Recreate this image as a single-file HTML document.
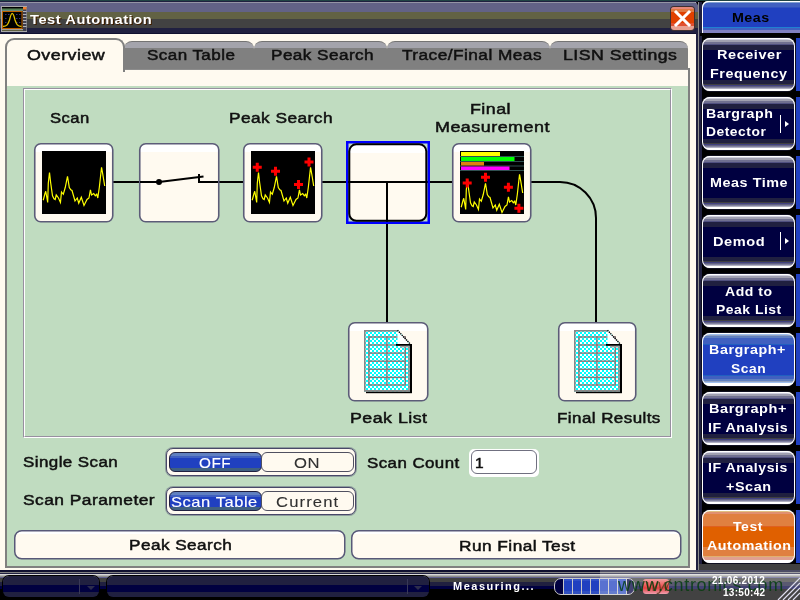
<!DOCTYPE html>
<html><head><meta charset="utf-8">
<style>
*{margin:0;padding:0;box-sizing:border-box}
html,body{width:800px;height:600px;overflow:hidden;background:#000}
body{position:relative;font-family:"Liberation Sans",sans-serif}
.a{position:absolute}
.t{position:absolute;white-space:nowrap;line-height:1;will-change:transform}
.tab{position:absolute;top:41px;height:29px;background:linear-gradient(#a4a4ac 0,#a4a4ac 6px,#808080 6px,#808080 27px,#8c8c8c 27px);border-top:1px solid #747474;border-radius:8px 8px 0 0}
.tt{font-size:15.5px;color:#101010;top:46px;-webkit-text-stroke:0.5px #101010}
.lbl{font-size:15.5px;color:#101010;-webkit-text-stroke:0.5px #101010}
.rb{position:absolute;left:702px;width:93px;height:53px;border-radius:8px;box-shadow:inset 0 0 0 1px #fff,0 0 0 1px #101020;
background:linear-gradient(#fff 0,#fff 1px,#d0d0e0 1px,#d0d0e0 2px,#a0a0b0 2px,#a0a0b0 4px,#707090 4px,#707090 6px,#505080 6px,#505080 7px,#202040 7px,#202040 12px,#000040 12px,#000040 42px,#202040 42px,#202040 46px,#404040 46px,#404040 47px,#404080 47px,#404080 48px,#606080 48px,#606080 49px,#8080a0 49px,#8080a0 50px,#b0b0c0 50px,#b0b0c0 51px,#fff 51px)}
.rb.blue{background:linear-gradient(#fff 0,#fff 1px,#a0c0f0 1px,#a0c0f0 2px,#90a0c0 2px,#90a0c0 3px,#6080c0 3px,#6080c0 5px,#4060c0 5px,#4060c0 11px,#2060c0 11px,#2060c0 12px,#2040c0 12px,#2040c0 42px,#2060c0 42px,#2060c0 43px,#4060c0 43px,#4060c0 46px,#6080c0 46px,#6080c0 48px,#90a0c0 48px,#90a0c0 49px,#a0c0f0 49px,#a0c0f0 50px,#fff 50px)}
.rb.org{background:linear-gradient(#fff 0,#fff 1px,#e0c080 1px,#e0c080 2px,#e09070 2px,#e09070 4px,#e08040 4px,#e08040 16px,#e06020 16px,#e06020 17px,#e06000 17px,#e06000 37px,#e08040 37px,#e08040 46px,#e0b070 46px,#e0b070 47px,#e0a090 47px,#e0a090 50px,#fff 50px)}
.rs{position:absolute;left:796px;width:4px;background:#2040c0}
.rt{font-size:13px;font-weight:bold;color:#fff;letter-spacing:1px}
</style></head><body>
<!-- main window background -->
<div class="a" style="left:0;top:0;width:696px;height:570px;background:#fffaf0"></div>
<!-- title bar -->
<div class="a" style="left:0;top:0;width:699px;height:34px;border-radius:0 9px 0 0;background:linear-gradient(#204444 0,#204444 1px,#202040 1px,#202040 2px,#9494a4 2px,#9494a4 3px,#626286 3px,#626286 12px,#626244 12px,#626244 19px,#424242 19px,#424242 28px,#202040 28px,#202040 33px,#101030 33px,#101030 34px)"></div>
<div class="a" style="left:0;top:0;width:800px;height:1px;background:#204444"></div><div class="a" style="left:0;top:1px;width:698px;height:1px;background:#202040"></div>
<div class="t" style="left:29.8px;top:13.0px;font-size:13px;font-weight:bold;color:#fff;letter-spacing:0.5px;transform:scaleX(1.125);transform-origin:0 0;text-shadow:1px 1px 0 #402000">Test Automation</div>


<!-- title icon -->
<svg class="a" style="left:0;top:0" width="30" height="34" viewBox="0 0 30 34">
<rect x="1.5" y="6.5" width="25" height="25" fill="#202020" stroke="#a8a8a8" stroke-width="1"/>
<rect x="2" y="7" width="21" height="1.5" fill="#000"/>
<rect x="2" y="8.5" width="21" height="1.8" fill="#508050"/>
<rect x="2" y="10.3" width="21" height="0.9" fill="#80a8a0"/>
<rect x="2.5" y="11.5" width="19.5" height="17" fill="#000" stroke="#c06000" stroke-width="1"/>
<g fill="#303080"><rect x="5" y="14" width="1.5" height="1"/><rect x="8" y="14" width="1.5" height="1"/><rect x="16" y="14" width="1.5" height="1"/><rect x="19" y="14" width="1.5" height="1"/><rect x="5" y="18" width="1.5" height="1"/><rect x="16" y="18" width="1.5" height="1"/><rect x="19" y="18" width="1.5" height="1"/><rect x="5" y="22" width="1.5" height="1"/><rect x="16" y="22" width="1.5" height="1"/><rect x="19" y="22" width="1.5" height="1"/></g>
<path d="M3,26.5 C7,26.5 8,24.5 9.5,20 C11,13.5 11.5,13.3 12.2,13.3 C13,13.3 13.5,13.5 15,20 C16.5,24.5 17.5,26.5 21.5,26.5" fill="none" stroke="#e0c000" stroke-width="1.3"/>
<rect x="2" y="29" width="21" height="1" fill="#a0a0a0"/>
<rect x="2" y="30" width="21" height="1" fill="#606040"/>
<rect x="23" y="7" width="3.5" height="24" fill="#404050"/>
<rect x="23" y="7" width="3.5" height="2.5" fill="#f08030"/>
<g fill="#d0d0d0"><rect x="23" y="11" width="3.5" height="0.8"/><rect x="23" y="14" width="3.5" height="0.8"/><rect x="23" y="17" width="3.5" height="0.8"/><rect x="23" y="20" width="3.5" height="0.8"/><rect x="23" y="23" width="3.5" height="0.8"/><rect x="23" y="26" width="3.5" height="0.8"/></g>
</svg>
<!-- close button -->
<div class="a" style="left:671px;top:7px;width:23px;height:23px;border-radius:3px;box-shadow:0 0 0 1px #403030;background:linear-gradient(#e88878 0,#e88878 2px,#e07840 2px,#e07840 5px,#e04000 5px,#e04000 16px,#e05030 16px,#e05030 19px,#e8a090 19px)"></div>
<svg class="a" style="left:671px;top:7px" width="23" height="23" viewBox="0 0 23 23"><path d="M5,5 L18,18 M18,5 L5,18" stroke="#fff" stroke-width="3" stroke-linecap="square"/></svg>

<!-- right strip -->
<div class="a" style="left:696px;top:33px;width:4px;height:537px;background:#202040"></div><div class="a" style="left:699px;top:2px;width:3px;height:31px;background:#202040"></div>
<div class="a" style="left:698px;top:2px;width:1px;height:568px;background:#909090"></div>

<!-- tab panel -->
<div class="a" style="left:5px;top:68px;width:685px;height:500px;border:2px solid #808080;border-top:none;background:#fffaf0"></div>
<div class="a" style="left:7px;top:86px;width:681px;height:480px;background:#c0dcc0"></div>
<div class="a" style="left:23px;top:88px;width:649px;height:350px;border-top:1px solid #9890a0;border-left:1px solid #9890a0;border-bottom:1px solid #fff;border-right:1px solid #fff"></div>
<div class="a" style="left:24px;top:89px;width:647px;height:348px;border-top:1px solid #fff;border-left:1px solid #fff;border-bottom:1px solid #9890a0;border-right:1px solid #9890a0"></div>

<!-- tabs -->
<div class="tab" style="left:124px;width:130px"></div>
<div class="tab" style="left:254px;width:133px"></div>
<div class="tab" style="left:387px;width:163px"></div>
<div class="tab" style="left:550px;width:138px"></div>
<div class="a" style="left:5px;top:38px;width:120px;height:34px;background:#fffaf0;border:2px solid #808080;border-bottom:none;border-radius:9px 9px 0 0"></div>
<div class="a" style="left:7px;top:68px;width:116px;height:4px;background:#fffaf0"></div>
<div class="t tt" style="left:26.7px;top:47.3px;letter-spacing:0.4px;transform:scaleX(1.153);transform-origin:0 0">Overview</div>
<div class="t tt" style="left:146.5px;top:47.3px;letter-spacing:0.4px;transform:scaleX(1.098);transform-origin:0 0">Scan Table</div>
<div class="t tt" style="left:271.3px;top:47.3px;letter-spacing:0.4px;transform:scaleX(1.106);transform-origin:0 0">Peak Search</div>
<div class="t tt" style="left:401.5px;top:47.3px;letter-spacing:0.4px;transform:scaleX(1.115);transform-origin:0 0">Trace/Final Meas</div>
<div class="t tt" style="left:563.2px;top:47.3px;letter-spacing:0.4px;transform:scaleX(1.144);transform-origin:0 0">LISN Settings</div>

<!-- DIAGRAM -->
<svg class="a" style="left:0;top:0" width="800" height="600" viewBox="0 0 800 600">
<defs>
<linearGradient id="bx2" x1="0" y1="0" x2="0" y2="1"><stop offset="0" stop-color="#fff"/><stop offset="0.1" stop-color="#fff"/><stop offset="0.1" stop-color="#fffaf0"/><stop offset="1" stop-color="#fffaf0"/></linearGradient>
<linearGradient id="bx" x1="0" y1="0" x2="0" y2="1"><stop offset="0" stop-color="#fff"/><stop offset="0.11" stop-color="#fff"/><stop offset="0.11" stop-color="#fffaf0"/><stop offset="1" stop-color="#fffaf0"/></linearGradient>
<pattern id="chk" x="0" y="0" width="4" height="4" patternUnits="userSpaceOnUse"><rect width="4" height="4" fill="#fff"/><rect width="2" height="2" fill="#00ffff"/><rect x="2" y="2" width="2" height="2" fill="#00ffff"/></pattern>
<polyline id="tr" fill="none" stroke="#ffff00" stroke-width="1.2" points="1.2,49.25 3,42.5 3.75,40.25 4.8,46.25 5.7,51.5 6.3,32 7.5,21.5 8.7,32 10.5,44.75 12,47.75 13.2,48.5 14.25,44 16.5,47 18.45,51.5 19.5,41 21.3,43.25 23.25,36.5 25.5,25.25 27.3,36.5 28.8,38.75 30,39.5 33,50 35.25,47 36.75,52.25 39.3,46.25 42,54.5 45,48.5 46.95,47 48.45,38.75 49.5,44 51.75,42.5 53.25,44.75 54.75,43.25 55.8,47 57.3,36.5 59.55,16.25 60.75,23 62.7,35"/>
<path id="cr" d="M-1.5,-4.5h3v3h3v3h-3v3h-3v-3h-3v-3h3z" fill="#ff0000"/>
<g id="doc">
<polygon points="0,0 33.5,0 46,14 46,61.5 0,61.5" fill="url(#chk)"/>
<rect x="46" y="14" width="2" height="49" fill="#000"/>
<rect x="2" y="61.5" width="46" height="1.7" fill="#000"/>
<rect x="0" y="0" width="1.6" height="61.5" fill="#888"/>
<rect x="0" y="0" width="33.5" height="1.6" fill="#888"/>
<rect x="0" y="60" width="46" height="1.6" fill="#888"/>
<rect x="44.2" y="16" width="1.6" height="45.5" fill="#888"/>
<g fill="#887878">
<rect x="4.2" y="6.3" width="1.4" height="49"/>
<rect x="40.6" y="6.3" width="1.4" height="49"/>
<rect x="22.2" y="6.3" width="1.4" height="49"/>
<rect x="4.2" y="6.3" width="37.8" height="1.4"/>
<rect x="4.2" y="14.3" width="37.8" height="1.4"/>
<rect x="4.2" y="22.4" width="37.8" height="1.4"/>
<rect x="4.2" y="30.5" width="37.8" height="1.4"/>
<rect x="4.2" y="38.6" width="37.8" height="1.4"/>
<rect x="4.2" y="46.7" width="37.8" height="1.4"/>
<rect x="4.2" y="54.3" width="37.8" height="1.4"/>
</g>
<polygon points="33.5,0.5 33.5,14 46,14" fill="#fff"/>
<line x1="33.5" y1="0.3" x2="46.5" y2="14.3" stroke="#000" stroke-width="1.4" stroke-dasharray="1.3 0.8"/>
<rect x="32" y="14" width="16" height="1.8" fill="#000"/>
<rect x="36" y="15.8" width="9" height="1.6" fill="#a0a0a0"/>
</g>
</defs>

<!-- connection lines -->
<g stroke="#000" stroke-width="2" fill="none">
<line x1="112" y1="182" x2="159" y2="182"/>
<line x1="199" y1="182" x2="245" y2="182"/>
<line x1="321" y1="182" x2="454" y2="182"/>
<path d="M530,182 H560 A36,36 0 0 1 596,218 V323"/>
<line x1="387" y1="182" x2="387" y2="323"/>
</g>

<!-- boxes -->
<rect x="34.75" y="143.75" width="78" height="78" rx="6" fill="url(#bx)" stroke="#5c5c78" stroke-width="1.6"/>
<rect x="139.75" y="143.75" width="79" height="78" rx="6" fill="url(#bx)" stroke="#5c5c78" stroke-width="1.6"/>
<rect x="243.75" y="143.75" width="78" height="78" rx="6" fill="url(#bx)" stroke="#5c5c78" stroke-width="1.6"/>
<rect x="452.75" y="143.75" width="78" height="78" rx="6" fill="url(#bx)" stroke="#5c5c78" stroke-width="1.6"/>
<rect x="348.75" y="322.75" width="79" height="78" rx="6" fill="url(#bx)" stroke="#5c5c78" stroke-width="1.6"/>
<rect x="558.75" y="322.75" width="77" height="78" rx="6" fill="url(#bx)" stroke="#5c5c78" stroke-width="1.6"/>

<!-- selected box -->
<rect x="347.25" y="142.25" width="81.5" height="80.5" fill="none" stroke="#0000ff" stroke-width="2.5"/>
<rect x="349.3" y="144.3" width="77" height="76.5" rx="7" fill="url(#bx)" stroke="#000" stroke-width="2"/>
<g stroke="#000" stroke-width="2"><line x1="349" y1="182" x2="427" y2="182"/><line x1="387" y1="182" x2="387" y2="221"/></g>

<!-- switch -->
<g stroke="#000" stroke-width="2" fill="none">
<line x1="140" y1="182" x2="159" y2="182"/>
<line x1="159" y1="182" x2="203.5" y2="176.5"/>
<polyline points="199,174 199,182 218,182"/>
</g>
<circle cx="159" cy="182" r="3" fill="#000"/>

<!-- scan screen -->
<g transform="translate(42,151)"><rect width="64" height="63" fill="#000"/><use href="#tr"/></g>
<!-- peak search screen -->
<g transform="translate(251,151)"><rect width="64" height="63" fill="#000"/><use href="#tr"/>
<use href="#cr" x="6.25" y="16.25"/><use href="#cr" x="24.5" y="20.3"/><use href="#cr" x="47.5" y="33.5"/><use href="#cr" x="58" y="11"/></g>
<!-- final screen -->
<g transform="translate(460,151)"><rect width="64" height="63" fill="#000"/>
<rect x="0" y="5" width="64" height="1" fill="#305050"/><rect x="0" y="10" width="64" height="1" fill="#305050"/><rect x="0" y="14.5" width="64" height="1" fill="#305050"/><rect x="0" y="19" width="64" height="1" fill="#305050"/>
<rect x="1" y="1" width="39" height="4" fill="#ffff00"/>
<rect x="1" y="6" width="53.5" height="4" fill="#00ff00"/>
<rect x="1" y="11" width="23" height="3.5" fill="#e08010"/>
<rect x="1" y="15.5" width="48.5" height="3.5" fill="#ff00ff"/>
<use href="#tr" y="7"/>
<use href="#cr" x="7.2" y="32"/><use href="#cr" x="25.5" y="26.3"/><use href="#cr" x="48.4" y="36.2"/><use href="#cr" x="58.9" y="57.2"/></g>

<!-- docs -->
<use href="#doc" x="364" y="330"/>
<use href="#doc" x="574" y="330"/>

<!-- bottom buttons -->
<rect x="14.75" y="530.75" width="330" height="28" rx="7" fill="url(#bx2)" stroke="#585878" stroke-width="1.5"/>
<rect x="351.75" y="530.75" width="329" height="28" rx="7" fill="url(#bx2)" stroke="#585878" stroke-width="1.5"/>
</svg>

<!-- diagram labels -->
<div class="t lbl" style="left:49.8px;top:110.0px;letter-spacing:0.4px;transform:scaleX(1.073);transform-origin:0 0">Scan</div>
<div class="t lbl" style="left:229.3px;top:110.4px;letter-spacing:0.4px;transform:scaleX(1.116);transform-origin:0 0">Peak Search</div>
<div class="t lbl" style="left:469.5px;top:100.5px;letter-spacing:0.4px;transform:scaleX(1.151);transform-origin:0 0">Final</div>
<div class="t lbl" style="left:434.8px;top:119.0px;letter-spacing:0.4px;transform:scaleX(1.158);transform-origin:0 0">Measurement</div>
<div class="t lbl" style="left:349.5px;top:409.5px;letter-spacing:0.4px;transform:scaleX(1.150);transform-origin:0 0">Peak List</div>
<div class="t lbl" style="left:557.4px;top:409.5px;letter-spacing:0.4px;transform:scaleX(1.095);transform-origin:0 0">Final Results</div>

<!-- controls -->
<div class="t lbl" style="left:23.2px;top:454.1px;letter-spacing:0.4px;transform:scaleX(1.093);transform-origin:0 0">Single Scan</div>
<div class="t lbl" style="left:23.2px;top:492.2px;letter-spacing:0.4px;transform:scaleX(1.123);transform-origin:0 0">Scan Parameter</div>
<div class="t lbl" style="left:367.0px;top:455.0px;letter-spacing:0.4px;transform:scaleX(1.090);transform-origin:0 0">Scan Count</div>

<!-- right panel -->
<div class="a" style="left:702px;top:1px;width:98px;height:32px;border-radius:6px 0 0 0;box-shadow:inset 1px 1px 0 #fff;background:linear-gradient(#fff 0,#fff 1px,#80a0d0 1px,#80a0d0 2px,#4060c0 2px,#4060c0 6px,#3050c0 6px,#3050c0 7px,#2040c0 7px,#2040c0 26px,#2080d0 26px,#2080d0 27px,#4060c0 27px,#4060c0 29px,#8080c0 29px)"></div>
<div class="t" style="left:731.5px;top:11px;font-size:13px;font-weight:bold;color:#000;letter-spacing:0.4px;transform:scaleX(1.1);transform-origin:0 0">Meas</div>

<div class="a" style="left:700px;top:36px;width:2px;height:530px;background:#202040"></div>
<div class="rs" style="top:38px;height:53px"></div>
<div class="rs" style="top:97px;height:53px"></div>
<div class="rs" style="top:156px;height:53px"></div>
<div class="rs" style="top:215px;height:53px"></div>
<div class="rs" style="top:274px;height:53px"></div>
<div class="rs" style="top:333px;height:53px"></div>
<div class="rs" style="top:392px;height:53px"></div>
<div class="rs" style="top:451px;height:53px"></div>
<div class="rs" style="top:510px;height:53px"></div>
<div class="rb" style="top:38px"></div>
<div class="rb" style="top:97px"></div>
<div class="rb" style="top:156px"></div>
<div class="rb" style="top:215px"></div>
<div class="rb" style="top:274px"></div>
<div class="rb blue" style="top:333px"></div>
<div class="rb" style="top:392px"></div>
<div class="rb" style="top:451px"></div>
<div class="a" style="left:699px;top:564px;width:101px;height:6px;background:#404040"></div>
<div class="rb org" style="top:510px"></div>


<!-- toggles -->
<div class="a" style="left:166px;top:448px;width:190px;height:28px;border:1px solid #484868;border-radius:7px;box-shadow:0 0 0 1px rgba(80,80,112,0.45);background:#fffaf0"></div>
<div class="a" style="left:169px;top:452px;width:93px;height:20px;border:1px solid #202040;border-radius:6px;background:linear-gradient(#6080c0 0,#6080c0 3px,#4060c0 3px,#4060c0 5px,#2040c0 5px,#2040c0 15px,#406080 15px)"></div>
<div class="a" style="left:261px;top:452px;width:93px;height:20px;border:1px solid #505060;border-radius:6px;background:#fffaf0"></div>
<div class="a" style="left:166px;top:487px;width:190px;height:28px;border:1px solid #484868;border-radius:7px;box-shadow:0 0 0 1px rgba(80,80,112,0.45);background:#fffaf0"></div>
<div class="a" style="left:169px;top:491px;width:93px;height:20px;border:1px solid #202040;border-radius:6px;background:linear-gradient(#6080c0 0,#6080c0 3px,#4060c0 3px,#4060c0 5px,#2040c0 5px,#2040c0 15px,#406080 15px)"></div>
<div class="a" style="left:261px;top:491px;width:93px;height:20px;border:1px solid #505060;border-radius:6px;background:#fffaf0"></div>
<div class="t" style="left:198.5px;top:454.5px;font-size:15px;color:#fff;-webkit-text-stroke:0.15px #fff;letter-spacing:0.5px;transform:scaleX(1.02);transform-origin:0 0">OFF</div>
<div class="t" style="left:293.5px;top:454.5px;font-size:15px;color:#303030;-webkit-text-stroke:0.1px #303030;letter-spacing:0.5px;transform:scaleX(1.11);transform-origin:0 0">ON</div>
<div class="t" style="left:170.5px;top:493.5px;font-size:15px;color:#fff;-webkit-text-stroke:0.15px #fff;letter-spacing:0.5px;transform:scaleX(1.10);transform-origin:0 0">Scan Table</div>
<div class="t" style="left:276px;top:493.5px;font-size:15px;color:#303030;-webkit-text-stroke:0.1px #303030;letter-spacing:1px;transform:scaleX(1.11);transform-origin:0 0">Current</div>
<!-- scan count input -->
<div class="a" style="left:469px;top:449px;width:70px;height:28px;border-radius:5px;background:#fff"></div>
<div class="a" style="left:471px;top:450px;width:66px;height:24px;border:1.5px solid #707080;border-radius:6px;background:#fff"></div>
<div class="t lbl" style="left:474.5px;top:454.5px;letter-spacing:0.4px;transform:scaleX(1.000);transform-origin:0 0">1</div>
<div class="t lbl" style="left:128.5px;top:537.2px;letter-spacing:0.4px;transform:scaleX(1.109);transform-origin:0 0">Peak Search</div>
<div class="t lbl" style="left:458.7px;top:537.7px;letter-spacing:0.4px;transform:scaleX(1.116);transform-origin:0 0">Run Final Test</div>

<!-- right panel texts -->
<div class="t rt" style="left:716.5px;top:48.0px;letter-spacing:0.5px;transform:scaleX(1.114);transform-origin:0 0">Receiver</div>
<div class="t rt" style="left:709.5px;top:67.2px;letter-spacing:0.5px;transform:scaleX(1.103);transform-origin:0 0">Frequency</div>
<div class="t rt" style="left:705.7px;top:106.8px;letter-spacing:0.5px;transform:scaleX(1.090);transform-origin:0 0">Bargraph</div>
<div class="t rt" style="left:706.0px;top:124.9px;letter-spacing:0.5px;transform:scaleX(1.063);transform-origin:0 0">Detector</div>
<div class="a" style="left:780px;top:115px;width:1px;height:18px;background:#fff"></div>
<div class="a" style="left:785px;top:121px;width:0;height:0;border-left:4px solid #fff;border-top:3.5px solid transparent;border-bottom:3.5px solid transparent"></div>
<div class="t rt" style="left:709.5px;top:176.0px;letter-spacing:0.5px;transform:scaleX(1.105);transform-origin:0 0">Meas Time</div>
<div class="t rt" style="left:713.2px;top:235.0px;letter-spacing:0.5px;transform:scaleX(1.121);transform-origin:0 0">Demod</div>
<div class="a" style="left:780px;top:232px;width:1px;height:18px;background:#fff"></div>
<div class="a" style="left:785px;top:238px;width:0;height:0;border-left:4px solid #fff;border-top:3.5px solid transparent;border-bottom:3.5px solid transparent"></div>
<div class="t rt" style="left:725.2px;top:284.6px;letter-spacing:0.5px;transform:scaleX(1.078);transform-origin:0 0">Add to</div>
<div class="t rt" style="left:715.5px;top:302.6px;letter-spacing:0.5px;transform:scaleX(1.068);transform-origin:0 0">Peak List</div>
<div class="t rt" style="left:708.8px;top:343.0px;letter-spacing:0.5px;transform:scaleX(1.102);transform-origin:0 0">Bargraph+</div>
<div class="t rt" style="left:730.8px;top:362.0px;letter-spacing:0.5px;transform:scaleX(1.062);transform-origin:0 0">Scan</div>
<div class="t rt" style="left:708.8px;top:402.4px;letter-spacing:0.5px;transform:scaleX(1.116);transform-origin:0 0">Bargraph+</div>
<div class="t rt" style="left:707.5px;top:421px;letter-spacing:0.5px;transform:scaleX(1.088);transform-origin:0 0">IF Analysis</div>
<div class="t rt" style="left:708.0px;top:461px;letter-spacing:0.5px;transform:scaleX(1.084);transform-origin:0 0">IF Analysis</div>
<div class="t rt" style="left:726.0px;top:479.8px;letter-spacing:0.5px;transform:scaleX(1.106);transform-origin:0 0">+Scan</div>
<div class="t rt" style="left:733.0px;top:520.0px;letter-spacing:0.5px;transform:scaleX(1.080);transform-origin:0 0">Test</div>
<div class="t rt" style="left:707.0px;top:538.6px;letter-spacing:0.5px;transform:scaleX(1.096);transform-origin:0 0">Automation</div>

<!-- status bar -->
<div class="a" style="left:0;top:570px;width:800px;height:30px;background:linear-gradient(#101030 0,#101030 2px,#808080 2px,#808080 3px,#202040 3px,#202040 4px,#d8d8d8 4px,#d8d8d8 5px,#b0b0b0 5px,#b0b0b0 6px,#8c8c8c 6px,#8c8c8c 7px,#606090 7px,#606090 8px,#404040 8px,#404040 12px,#202040 12px,#202040 16px,#000040 16px,#000040 19px,#000 19px)"></div>
<div class="a" style="left:3px;top:576px;width:96px;height:21px;border-radius:6px;box-shadow:0 0 0 1px #000;background:linear-gradient(#202040 0,#202040 9px,#000040 9px,#000040 16px,#202040 16px)"></div>
<div class="a" style="left:107px;top:576px;width:322px;height:21px;border-radius:6px;box-shadow:0 0 0 1px #000;background:linear-gradient(#202040 0,#202040 9px,#000040 9px,#000040 16px,#202040 16px)"></div>
<div class="a" style="left:79px;top:579px;width:1px;height:15px;background:#383858"></div><div class="a" style="left:87px;top:586px;width:0;height:0;border-top:4px solid #2c2c4c;border-left:4px solid transparent;border-right:4px solid transparent"></div>
<div class="a" style="left:407px;top:579px;width:1px;height:15px;background:#383858"></div><div class="a" style="left:414px;top:586px;width:0;height:0;border-top:4px solid #2c2c4c;border-left:4px solid transparent;border-right:4px solid transparent"></div>
<div class="t" style="left:452.8px;top:581.3px;font-size:11px;font-weight:bold;color:#fff;letter-spacing:1.5px">Measuring...</div>
<div class="a" style="left:554px;top:578px;width:81px;height:17px;border:1px solid #c8c8c8;border-radius:7px;overflow:hidden;background:#000040">
<div class="a" style="left:8px;top:0;width:64px;height:15px;background:linear-gradient(#3050c8 0,#3050c8 2px,#2040c0 2px,#2040c0 12px,#3050c0 12px)"></div>
<div class="a" style="left:8px;top:0;width:1px;height:15px;background:#c8c8c8"></div>
<div class="a" style="left:17px;top:0;width:1px;height:15px;background:#c8c8c8"></div>
<div class="a" style="left:26px;top:0;width:1px;height:15px;background:#c8c8c8"></div>
<div class="a" style="left:35px;top:0;width:1px;height:15px;background:#c8c8c8"></div>
<div class="a" style="left:44px;top:0;width:1px;height:15px;background:#c8c8c8"></div>
<div class="a" style="left:53px;top:0;width:1px;height:15px;background:#c8c8c8"></div>
<div class="a" style="left:62px;top:0;width:1px;height:15px;background:#c8c8c8"></div>
<div class="a" style="left:71px;top:0;width:1px;height:15px;background:#c8c8c8"></div>
</div>
<!-- watermark overlay -->
<div class="a" style="left:600px;top:570px;width:200px;height:30px;background:rgba(255,255,255,0.26)"></div>
<div class="a" style="left:643px;top:579px;width:26px;height:15px;border-radius:3px;background:linear-gradient(#f0a0a0,#f06060 40%,#e04040 60%,#f0a0b0)"></div>
<div class="t" style="left:646px;top:578px;font-size:16px;font-style:italic;color:rgba(90,60,30,0.8)">wy/</div>
<div class="t" style="left:618px;top:575.5px;font-size:18px;color:rgba(0,60,10,0.8);letter-spacing:0.7px">www.cntronics.com</div>
<div class="t" style="left:712px;top:576px;font-size:10px;font-weight:bold;color:#fff;letter-spacing:0.3px">21.06.2012</div>
<div class="t" style="left:723px;top:588px;font-size:10px;font-weight:bold;color:#fff;letter-spacing:0.3px">13:50:42</div>
<svg class="a" style="left:770px;top:576px" width="30" height="24" viewBox="0 0 30 24"><g stroke="#e0e0f0" stroke-width="1.2"><line x1="8" y1="24" x2="30" y2="2"/><line x1="13" y1="24" x2="30" y2="7"/><line x1="18" y1="24" x2="30" y2="12"/><line x1="23" y1="24" x2="30" y2="17"/></g></svg>

</body></html>
